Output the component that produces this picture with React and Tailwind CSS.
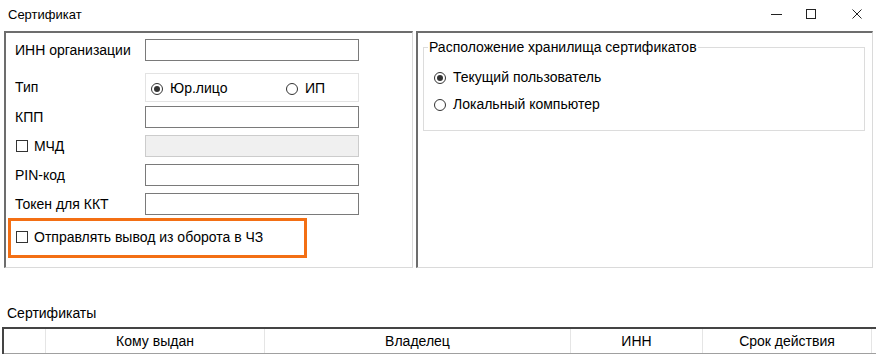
import React from "react";

const font = { fontFamily: '"Liberation Sans", Arial, sans-serif' };

function Radio({ checked, label }) {
  return (
    <label className="flex items-center gap-[7px]">
      <span className="w-[12px] h-[12px] rounded-full border border-[#333] bg-white flex items-center justify-center">
        {checked && <span className="w-[6px] h-[6px] rounded-full bg-[#333]" />}
      </span>
      <span>{label}</span>
    </label>
  );
}

function Checkbox({ label }) {
  return (
    <label className="flex items-center gap-[6px]">
      <span className="w-[12px] h-[12px] border border-[#333] bg-white" />
      <span>{label}</span>
    </label>
  );
}

function Field({ label, disabled, children }) {
  return (
    <div className="flex items-center">
      <div className="w-[130px]">{label}</div>
      {children || (
        <div
          className={
            disabled
              ? "w-[214px] h-[22px] border border-[#cccccc] bg-[#f0f0f0]"
              : "w-[214px] h-[22px] border border-[#7a7a7a] bg-white"
          }
        />
      )}
    </div>
  );
}

export default function App() {
  return (
    <div
      className="w-[880px] h-[356px] bg-white text-black text-[14px] leading-[21px] overflow-hidden"
      style={font}
    >
      {/* title bar */}
      <div className="h-[31px] flex items-center justify-between pl-[8px] pr-[18px]">
        <span className="text-[13px] -mt-[3px]">Сертификат</span>
        <div className="flex items-center -mt-[3px]">
          <span className="w-[11px] h-[1px] bg-[#222]" />
          <span className="ml-[24px] w-[10px] h-[10px] border border-[#222]" />
          <svg className="ml-[36px]" width="10" height="10" viewBox="0 0 10 10">
            <path d="M0.5 0.5 L9.5 9.5 M9.5 0.5 L0.5 9.5" stroke="#222" strokeWidth="1" />
          </svg>
        </div>
      </div>

      {/* panels */}
      <div className="flex gap-[3px] pl-[4px]">
        <div className="w-[409px] h-[237px] border-l-2 border-t-2 border-l-[#6d6d6d] border-t-[#6d6d6d] border-r border-b border-r-[#dadada] border-b-[#dadada] pt-[6px] pl-[2px]">
          <div className="flex flex-col pl-[7px]">
            <Field label="ИНН организации" />
            <div className="mt-[12px]">
              <Field label="Тип">
                <div className="w-[214px] h-[29px] border border-[#e3e3e3] flex items-center pt-[2px] pl-[5px]">
                  <div className="w-[135px]">
                    <Radio checked label="Юр.лицо" />
                  </div>
                  <Radio label="ИП" />
                </div>
              </Field>
            </div>
            <div className="mt-[4px] flex flex-col gap-[7px]">
              <Field label="КПП" />
              <Field label={<div className="pl-[1px]"><Checkbox label="МЧД" /></div>} disabled />
              <Field label="PIN-код" />
              <Field label="Токен для ККТ" />
            </div>
          </div>
          <div className="mt-[3px] w-[299px] h-[40px] border-[3px] border-[#f36f14] flex items-center pl-[5px] pb-[2px]">
            <Checkbox label="Отправлять вывод из оборота в ЧЗ" />
          </div>
        </div>

        <div className="w-[457px] h-[237px] border-l-2 border-t-2 border-l-[#6d6d6d] border-t-[#6d6d6d] border-r border-b border-r-[#dadada] border-b-[#dadada] pt-[14px] pl-[5px]">
          <div className="relative w-[442px] h-[84px] border border-[#dcdcdc] pt-[19px] pl-[10px]">
            <span className="absolute -top-[10px] left-[4px] bg-white px-[1px] leading-[18px]">
              Расположение хранилища сертификатов
            </span>
            <div className="flex flex-col gap-[6px]">
              <Radio checked label="Текущий пользователь" />
              <Radio label="Локальный компьютер" />
            </div>
          </div>
        </div>
      </div>

      {/* certificates */}
      <div className="pl-[7px] mt-[36px] leading-[18px]">Сертификаты</div>
      <div className="ml-[2px] mt-[5px] w-[874px] border-t-2 border-l-2 border-[#444]">
        <div className="flex h-[25px] border-b border-[#a0a0a0]">
          <div className="w-[42px] border-r border-[#e5e5e5]" />
          <div className="w-[219px] border-r border-[#e5e5e5] flex items-center justify-center">Кому выдан</div>
          <div className="w-[306px] border-r border-[#e5e5e5] flex items-center justify-center">Владелец</div>
          <div className="w-[132px] border-r border-[#e5e5e5] flex items-center justify-center">ИНН</div>
          <div className="w-[169px] border-r border-[#e5e5e5] flex items-center justify-center">Срок действия</div>
        </div>
      </div>
    </div>
  );
}
